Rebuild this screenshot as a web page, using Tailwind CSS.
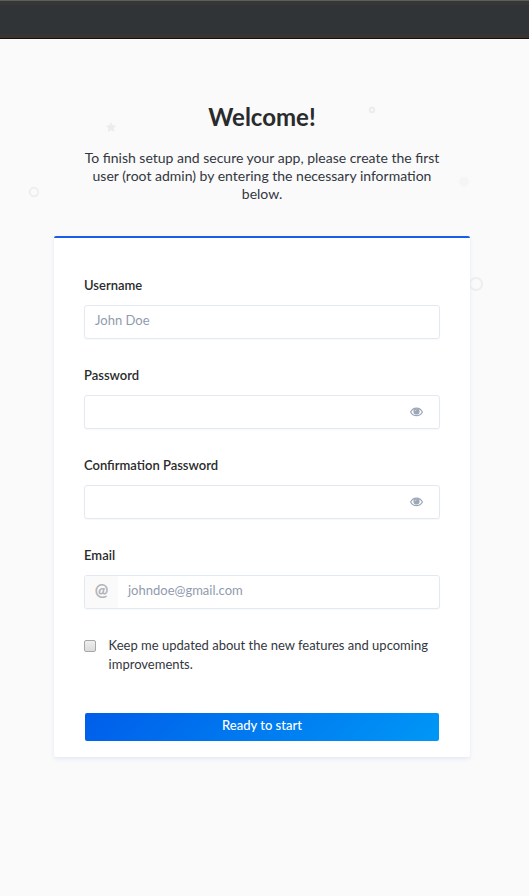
<!DOCTYPE html>
<html lang="en">
<head>
<meta charset="utf-8">
<title>Welcome</title>
<script src="https://cdn.jsdelivr.net/npm/@tailwindcss/browser@4"></script>
</head>
<body class="relative h-[896px] overflow-hidden bg-[#fafafb] font-['Lato',sans-serif] text-[13px] text-[#333740]">
<header class="h-[39px] border-t border-b border-t-[#5b5f5e] border-b-[#151010] bg-[#303437]">
  <div class="flex h-full flex-col justify-between"><div class="h-1 bg-[#363635]"></div><div class="h-1 bg-[#383432]"></div></div>
</header>

<svg class="absolute inset-0" width="529" height="896" fill="none">
  <path d="M111 122l1.600 3.200 3.700.5-2.700 2.600.7 3.600-3.300-1.700-3.300 1.700.7-3.600-2.700-2.600 3.700-.5z" fill="#ececed"/>
  <circle cx="372" cy="110" r="2.200" stroke="#ececed" stroke-width="2"/>
  <circle cx="464" cy="182" r="5" fill="#f5f5f8"/>
  <circle cx="34" cy="192" r="4.200" stroke="#eeeeef" stroke-width="2"/>
  <circle cx="476" cy="284" r="6.100" stroke="#eeeeef" stroke-width="2"/>
</svg>

<main class="relative ml-[54px] w-[416px] pt-[62px]">
  <h1 class="text-center text-[24px] leading-8 font-bold text-[#292b2c]">Welcome!</h1>
  <p class="mx-auto mt-4 w-[360px] text-center text-[14px] leading-[18px]">To finish setup and secure your app, please create the first user (root admin) by entering the necessary information below.</p>

  <form class="mt-[33px] h-[521px] rounded-[2px] border-t-2 border-[#1c5de7] bg-white px-[30px] pt-[38px] shadow-[0_2px_4px_0_#e3e9f3]">
    <div class="h-[90px]">
      <label class="block h-[29px] leading-[19px] font-semibold text-[#292b2c]">Username</label>
      <div class="flex h-[34px] items-center rounded-[3px] border border-[#e3e9f3] bg-white px-[10px] pb-[2px] text-[#919bae] shadow-[0_1px_1px_rgba(104,118,142,0.05)]">John Doe</div>
    </div>
    <div class="h-[90px]">
      <label class="block h-[29px] leading-[19px] font-semibold text-[#292b2c]">Password</label>
      <div class="flex h-[34px] items-center justify-end rounded-[3px] border border-[#e3e9f3] bg-white pr-4 pb-px shadow-[0_1px_1px_rgba(104,118,142,0.05)]">
        <svg width="13" height="10" viewBox="0 0 13 10"><path d="M.6 5C3.200-.2 9.800-.2 12.400 5 9.800 9.900 3.200 9.900.6 5z" fill="none" stroke="#9ba6b7" stroke-width="1.200"/><circle cx="6.500" cy="4.500" r="3.100" fill="#9ba6b7"/><path d="M5 4.300Q5.100 3 6.400 2.900" fill="none" stroke="#dfe4eb" stroke-width=".7"/></svg>
      </div>
    </div>
    <div class="h-[90px]">
      <label class="block h-[29px] leading-[19px] font-semibold text-[#292b2c]">Confirmation Password</label>
      <div class="flex h-[34px] items-center justify-end rounded-[3px] border border-[#e3e9f3] bg-white pr-4 pb-px shadow-[0_1px_1px_rgba(104,118,142,0.05)]">
        <svg width="13" height="10" viewBox="0 0 13 10"><path d="M.6 5C3.200-.2 9.800-.2 12.400 5 9.800 9.900 3.200 9.900.6 5z" fill="none" stroke="#9ba6b7" stroke-width="1.200"/><circle cx="6.500" cy="4.500" r="3.100" fill="#9ba6b7"/><path d="M5 4.300Q5.100 3 6.400 2.900" fill="none" stroke="#dfe4eb" stroke-width=".7"/></svg>
      </div>
    </div>
    <div class="h-[90px]">
      <label class="block h-[29px] leading-[19px] font-semibold text-[#292b2c]">Email</label>
      <div class="flex h-[34px] overflow-hidden rounded-[3px] border border-[#e3e9f3] bg-white text-[#919bae] shadow-[0_1px_1px_rgba(104,118,142,0.05)]">
        <span class="flex w-[33px] items-center justify-center bg-[#fafafb] pb-[5px] text-[16px] font-black text-[#b3b5b9]">@</span>
        <span class="flex items-center pb-[2px] pl-[10px]">johndoe@gmail.com</span>
      </div>
    </div>
    <div class="flex h-[77px] leading-[19px]">
      <span class="mt-[4px] mr-[12.600px] h-3 w-3 shrink-0 rounded-[2px] border border-[#a8a8a8] bg-linear-to-b from-[#eeeeee] to-[#dcdcdc]"></span>
      <span>Keep me updated about the new features and upcoming improvements.</span>
    </div>
    <button type="button" class="mx-px flex h-7 w-[354px] items-center justify-center rounded-[2px] bg-[linear-gradient(315deg,#0097f6_0%,#005eea_100%)] pb-[3px] font-medium text-white">Ready to start</button>
  </form>
</main>
</body>
</html>
